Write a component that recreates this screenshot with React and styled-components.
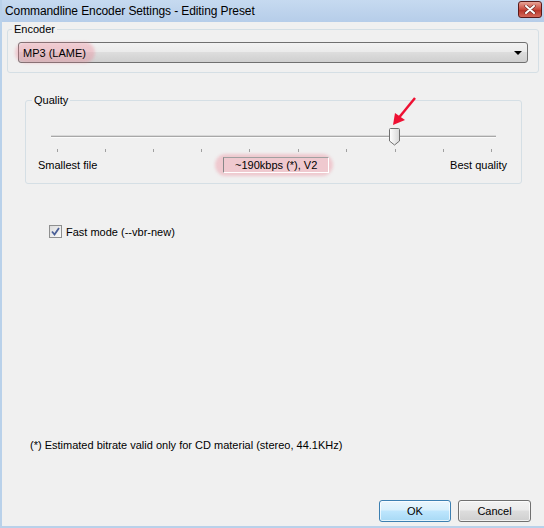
import React from 'react';
import styled, { createGlobalStyle } from 'styled-components';

const GlobalStyle = createGlobalStyle`
  html, body {
    margin: 0;
    padding: 0;
    background: #f0f0f0;
  }
  body {
    font-family: "Liberation Sans", Arial, sans-serif;
    font-size: 11px;
    color: #000;
  }
`;

const Window = styled.div`
  position: relative;
  width: 544px;
  height: 528px;
  box-sizing: border-box;
  border-left: 2px solid #b9d1ea;
  border-bottom: 2px solid #b9d1ea;
  background: #f0f0f0;
  display: flex;
  flex-direction: column;
  overflow: hidden;
`;

const TitleBar = styled.div`
  height: 22px;
  margin-left: -2px;
  flex: 0 0 22px;
  display: flex;
  align-items: center;
  justify-content: space-between;
  padding: 0 2px 0 5px;
  background: linear-gradient(#c6daf0, #b6cde9);
  font-size: 12px;
  letter-spacing: -0.1px;
  color: #000;
`;

const CloseButton = styled.div`
  width: 22px;
  height: 15px;
  margin-top: -3px;
  border: 1px solid #5a1a1a;
  border-radius: 3px;
  background: linear-gradient(#e8a598, #c9493c 50%, #b8352a 55%, #d4685a);
  display: flex;
  align-items: center;
  justify-content: center;
`;

const Client = styled.div`
  flex: 1;
  display: flex;
  flex-direction: column;
  padding: 0 5px 4px 5px;
`;

const GroupBox = styled.fieldset`
  margin: ${(p) => p.$margin || '0'};
  padding: ${(p) => p.$padding || '5px 10px 9px 10px'};
  border: 1px solid #d5dfe5;
  border-radius: 3px;
  min-width: 0;
`;

const Legend = styled.legend`
  padding: 0 2px;
  margin-left: -6px;
  line-height: 15px;
  font-size: 11px;
`;

const Combo = styled.div`
  position: relative;
  height: 21px;
  box-sizing: border-box;
  border: 1px solid #707070;
  border-radius: 3px;
  background: linear-gradient(#f2f2f2 0%, #ebebeb 45%, #dddddd 50%, #cfcfcf 100%);
  display: flex;
  align-items: center;
  justify-content: space-between;
  padding: 0 5px 0 4px;
`;

const ComboArrow = styled.span`
  width: 0;
  height: 0;
  border-left: 4px solid transparent;
  border-right: 4px solid transparent;
  border-top: 4px solid #000;
`;

const Highlight = styled.span`
  position: absolute;
  left: ${(p) => p.$left}px;
  top: ${(p) => p.$top}px;
  width: ${(p) => p.$w}px;
  height: ${(p) => p.$h}px;
  border-radius: 12px;
  background: rgba(236, 120, 140, 0.33);
  filter: blur(1.5px);
  pointer-events: none;
`;

const ComboText = styled.span`
  position: relative;
`;

const SliderBlock = styled.div`
  position: relative;
  height: 32px;
  margin: 0 11px 0 13px;
`;

const Track = styled.div`
  position: absolute;
  left: 0;
  right: 0;
  top: 11px;
  height: 1px;
  background: #a8a8a8;
  border-bottom: 1px solid #fbfbfb;
  border-top: 1px solid #d8d8d8;
`;

const Tick = styled.span`
  position: absolute;
  top: 25px;
  width: 1px;
  height: 3px;
  background: #a0a0a0;
`;

const Thumb = styled.svg`
  position: absolute;
  top: 4px;
`;

const LabelRow = styled.div`
  position: relative;
  display: flex;
  align-items: center;
  justify-content: space-between;
  height: 18px;
`;

const ValueBox = styled.div`
  position: relative;
  width: 106px;
  height: 16px;
  box-sizing: border-box;
  border-left: 1px solid #888;
  border-top: 1px solid #a0a0a0;
  border-right: 1px solid #fff;
  border-bottom: 1px solid #fff;
  display: flex;
  align-items: center;
  justify-content: center;
  margin-left: 5px;
`;

const CheckRow = styled.label`
  display: flex;
  align-items: center;
  gap: 4px;
  margin: 41px 0 0 42px;
`;

const CheckBox = styled.span`
  width: 13px;
  height: 13px;
  box-sizing: border-box;
  border: 1px solid #8e8f8f;
  background: linear-gradient(135deg, #dcdcdc, #fafafa);
  display: flex;
  align-items: center;
  justify-content: center;
`;

const Footnote = styled.div`
  margin: auto 0 0 23px;
`;

const ButtonRow = styled.div`
  display: flex;
  justify-content: flex-end;
  gap: 7px;
  margin: 49px 8px 0 0;
`;

const Button = styled.button`
  width: ${(p) => p.$w}px;
  height: 22px;
  font-family: inherit;
  font-size: 11px;
  color: #000;
  border-radius: 3px;
  border: 1px solid ${(p) => (p.$default ? '#3c7fb1' : '#707070')};
  background: ${(p) =>
    p.$default
      ? 'linear-gradient(#eaf6fd 0%, #d9f0fc 45%, #bee6fd 50%, #a7d9f5 100%)'
      : 'linear-gradient(#f2f2f2 0%, #ebebeb 45%, #dddddd 50%, #cfcfcf 100%)'};
  box-shadow: inset 0 0 0 1px rgba(255, 255, 255, 0.7);
  padding: 0;
`;

const Arrow = styled.svg`
  position: absolute;
  left: 385px;
  top: 96px;
  pointer-events: none;
`;

const ticks = [57, 105, 153, 201, 249, 298, 346, 395, 443, 491];

export default function App() {
  return (
    <>
      <GlobalStyle />
      <Window>
        <TitleBar>
          <span>Commandline Encoder Settings - Editing Preset</span>
          <CloseButton>
            <svg width="12" height="9" viewBox="0 0 12 9">
              <path d="M2 1 L10 8 M10 1 L2 8" stroke="#6b2a24" strokeWidth="3.2" strokeLinecap="round" />
              <path d="M2 1 L10 8 M10 1 L2 8" stroke="#fff" strokeWidth="2" strokeLinecap="round" />
            </svg>
          </CloseButton>
        </TitleBar>
        <Client>
          <GroupBox>
            <Legend>Encoder</Legend>
            <Combo>
              <Highlight $left={-4} $top={-1} $w={80} $h={21} />
              <ComboText>MP3 (LAME)</ComboText>
              <ComboArrow />
            </Combo>
          </GroupBox>

          <GroupBox $margin="20px 17px 0 18px" $padding="16px 14px 9px 12px">
            <Legend>Quality</Legend>
            <SliderBlock>
              <Track />
              {ticks.map((x) => (
                <Tick key={x} style={{ left: x - 51 }} />
              ))}
              <Thumb width="11" height="18" viewBox="0 0 11 18" style={{ left: 389 - 51 }}>
                <defs>
                  <linearGradient id="thumbFill" x1="0" y1="0" x2="1" y2="0">
                    <stop offset="0" stopColor="#ffffff" />
                    <stop offset="1" stopColor="#d6d6d6" />
                  </linearGradient>
                </defs>
                <path
                  d="M1.5 0.5 H9.5 Q10.5 0.5 10.5 1.5 V13 L5.5 17 L0.5 13 V1.5 Q0.5 0.5 1.5 0.5 Z"
                  fill="url(#thumbFill)"
                  stroke="#707070"
                />
              </Thumb>
            </SliderBlock>
            <LabelRow>
              <span>Smallest file</span>
              <Highlight $left={177} $top={-2} $w={118} $h={22} />
              <ValueBox>~190kbps (*), V2</ValueBox>
              <span>Best quality</span>
            </LabelRow>
          </GroupBox>

          <CheckRow>
            <CheckBox>
              <svg width="9" height="9" viewBox="0 0 9 9">
                <path d="M1 4.5 L3.5 7.5 L8 1" fill="none" stroke="#4a5f97" strokeWidth="1.8" />
              </svg>
            </CheckBox>
            <span>Fast mode (--vbr-new)</span>
          </CheckRow>

          <Footnote>(*) Estimated bitrate valid only for CD material (stereo, 44.1KHz)</Footnote>

          <ButtonRow>
            <Button $w={72} $default>OK</Button>
            <Button $w={73}>Cancel</Button>
          </ButtonRow>
        </Client>

        <Arrow width="32" height="34" viewBox="0 0 32 34">
          <path d="M28 2 L10 24" stroke="#ee1133" strokeWidth="2.5" fill="none" />
          <path d="M6 29 L8 17 L18 24 Z" fill="#ee1133" />
        </Arrow>
      </Window>
    </>
  );
}
